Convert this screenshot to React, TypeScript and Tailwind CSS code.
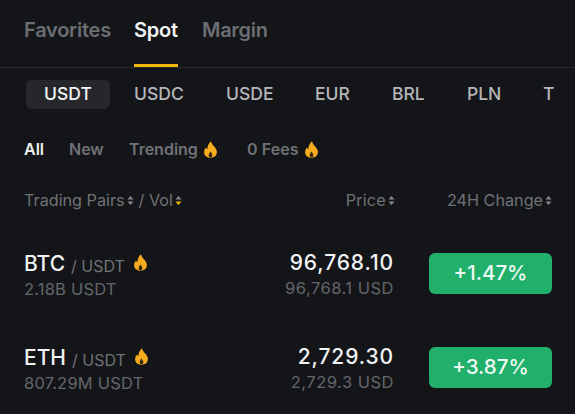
import React from 'react';

const QUOTES = [
  { label: 'USDC', width: 'w-[92px]' },
  { label: 'USDE', width: 'w-[89px]' },
  { label: 'EUR', width: 'w-[77px]' },
  { label: 'BRL', width: 'w-[75px]' },
  { label: 'PLN', width: 'w-[77px]' },
];

const PAIRS = [
  { base: 'BTC', vol: '2.18B USDT', price: '96,768.10', fiat: '96,768.1 USD', change: '+1.47%' },
  { base: 'ETH', vol: '807.29M USDT', price: '2,729.30', fiat: '2,729.3 USD', change: '+3.87%' },
];

const Flame = ({ className }: { className: string }) => (
  <svg viewBox="0 0 16 18" className={className}>
    <path
      fill="#f7ac1e"
      d="M8.6 0.3c0.4 2.3 1.5 3.5 2.8 4.9 1.7 1.8 3.4 3.6 3.4 6.4 0 3.6-2.6 6.1-6.8 6.1S1.2 15.2 1.2 11.8c0-2.1 0.9-3.6 2.1-5 0.2 0.9 0.6 1.5 1.3 1.9C4.6 5.6 6.2 2.3 8.6 0.3z"
    />
    <path fill="#3a2a10" d="M8 11.2c0.6 1.1 2 2.2 2 4 0 1.3-0.8 2.4-2 2.4s-2-1.1-2-2.4c0-1.8 1.4-2.9 2-4z" />
  </svg>
);

const Sort = ({ active }: { active?: boolean }) => (
  <svg viewBox="0 0 8 12" className="w-[7px] h-[11px] ml-[2px] shrink-0">
    <path d="M4 0.8 7.4 4.8H0.6z" fill="#84878c" />
    <path d="M4 11.2 7.4 7.2H0.6z" fill={active ? '#f0b90b' : '#84878c'} />
  </svg>
);

export default function App() {
  return (
    <div className="w-[575px] h-[414px] overflow-hidden bg-[#141518] font-['Inter','Noto_Sans',sans-serif]">
      <div className="flex gap-6 pl-6 h-[68px] border-b border-[#2a2b2e]">
        <div className="pt-[17px] text-[20px] leading-[26px] font-semibold text-[#6b6e73] tracking-[-0.25px] w-[87px]">Favorites</div>
        <div className="relative w-[44px] pt-[17px] -ml-[1px] text-[20px] leading-[26px] font-semibold text-[#f3f4f5] tracking-[-0.2px] text-center">
          Spot
          <div className="absolute left-0 right-0 bottom-0 h-[3px] bg-[#f0b90b]" />
        </div>
        <div className="pt-[17px] text-[20px] leading-[26px] font-semibold text-[#6b6e73] tracking-[-0.3px]">Margin</div>
      </div>

      <div className="flex items-center pl-[26px] mt-3 h-[29px] text-[17.5px] font-medium text-[#b4b6ba]">
        <div className="w-[84px] h-[29px] mr-6 flex items-center justify-center rounded-md bg-[#25272b] text-[#f1f2f3]">USDT</div>
        {QUOTES.map(q => (
          <div key={q.label} className={q.width}>{q.label}</div>
        ))}
        <div className="-ml-[1px]">T</div>
      </div>

      <div className="flex items-center pl-6 mt-[28px] h-[24px] text-[16px] font-semibold text-[#6f7277]">
        <span className="text-[#eff0f1] w-[45px]">All</span>
        <span className="w-[60px]">New</span>
        <span>Trending</span>
        <Flame className="w-[15px] h-[17px] ml-[5px] mr-7" />
        <span className="tracking-[0.1px] ml-[1px]">0 Fees</span>
        <Flame className="w-[15px] h-[17px] ml-[5px]" />
      </div>

      <div className="flex items-center justify-between pl-6 pr-[23px] mt-[27px] h-[24px] text-[16.2px] text-[#6f7277]">
        <div className="flex items-center">
          Trading Pairs
          <Sort />
          <span className="ml-[5px]">/ Vol</span>
          <Sort active />
        </div>
        <div className="flex items-center">
          <div className="flex items-center mr-[52px] tracking-[0.2px]">Price<Sort /></div>
          <div className="flex items-center">24H Change<Sort /></div>
        </div>
      </div>

      <div className="mt-[41px] flex flex-col gap-[53px] pl-6 pr-[23px]">
        {PAIRS.map(p => (
          <div key={p.base} className="flex items-center justify-between h-[41px]">
            <div className="flex flex-col mt-[6px]">
              <div className="flex items-center h-[26px]">
                <span className="text-[21px] font-medium text-[#f1f2f3]">{p.base}</span>
                <span className="ml-[6px] mt-[3px] text-[16px] text-[#6f7277]">/ USDT</span>
                <Flame className="w-[15px] h-[17px] ml-2 -mt-[4px]" />
              </div>
              <div className="text-[16.5px] leading-[25px] tracking-[0.2px] text-[#63666b]">{p.vol}</div>
            </div>
            <div className="flex items-center">
              <div className="flex flex-col items-end mr-[35px] mt-[4px]">
                <div className="h-[26px] flex items-center text-[21px] font-medium text-[#f1f2f3] tracking-[0.9px]">{p.price}</div>
                <div className="text-[16.5px] leading-[25px] tracking-[0.5px] text-[#63666b]">{p.fiat}</div>
              </div>
              <div className="w-[123px] h-[41px] flex items-center justify-center rounded-md bg-[#21b06b] text-[20.5px] font-medium text-[#eefaf4]">
                {p.change}
              </div>
            </div>
          </div>
        ))}
      </div>
    </div>
  );
}
